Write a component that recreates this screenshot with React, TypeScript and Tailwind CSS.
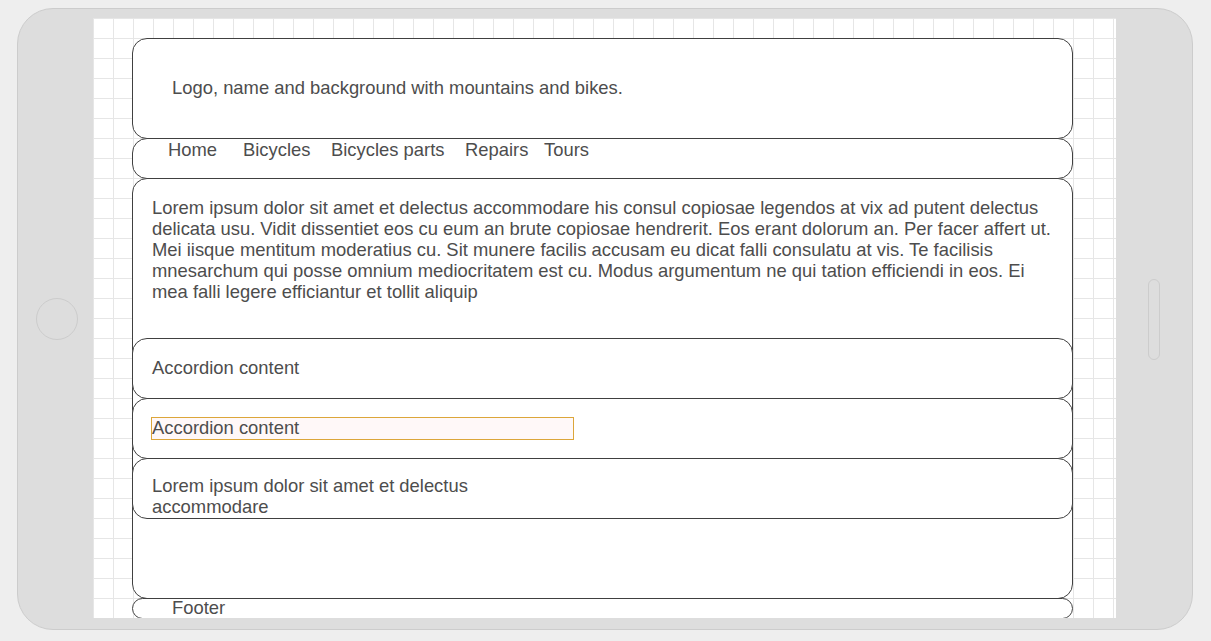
import React from "react";

const font = { fontFamily: '"Liberation Sans", Arial, sans-serif' };

export default function App() {
  return (
    <div
      className="w-[1211px] h-[641px] bg-[#eeeeee] pt-[8px] pl-[17px] overflow-hidden text-[#4d4d4d]"
      style={font}
    >
      <div className="w-[1176px] h-[622px] rounded-[36px] bg-[#dddddd] border border-[#cccccc] flex">
        {/* left bezel */}
        <div className="w-[75px] flex items-center justify-center pl-[2px]">
          <div className="w-[42px] h-[42px] rounded-full border border-[#cccccc]" />
        </div>

        {/* screen */}
        <div className="w-[1023px] h-[600px] mt-[9px] bg-white bg-[linear-gradient(to_right,#e6e6e6_1px,transparent_1px),linear-gradient(to_bottom,#e6e6e6_1px,transparent_1px)] [background-size:20px_20px] pl-[39px] pt-[20px] overflow-hidden">
          <div className="w-[941px] flex flex-col text-[18.4px] leading-[21px]">
            {/* header */}
            <div className="h-[101px] rounded-[15px] border border-[#404040] bg-white flex items-center pl-[39px] pb-[2px]">
              Logo, name and background with mountains and bikes.
            </div>

            {/* nav */}
            <div className="h-[41px] -mt-px rounded-[15px] border border-[#404040] bg-white flex items-start pl-[35px] leading-[21px]">
              <span className="w-[75px]">Home</span>
              <span className="w-[88px]">Bicycles</span>
              <span className="w-[134px]">Bicycles parts</span>
              <span className="w-[79px]">Repairs</span>
              <span>Tours</span>
            </div>

            {/* main */}
            <div className="h-[421px] -mt-px rounded-[15px] border border-[#404040] bg-white flex flex-col">
              <div className="h-[159px] pl-[19px] pt-[18px]">
                Lorem ipsum dolor sit amet et delectus accommodare his consul copiosae legendos at vix ad putent delectus
                <br />
                delicata usu. Vidit dissentiet eos cu eum an brute copiosae hendrerit. Eos erant dolorum an. Per facer affert ut.
                <br />
                Mei iisque mentitum moderatius cu. Sit munere facilis accusam eu dicat falli consulatu at vis. Te facilisis
                <br />
                mnesarchum qui posse omnium mediocritatem est cu. Modus argumentum ne qui tation efficiendi in eos. Ei
                <br />
                mea falli legere efficiantur et tollit aliquip
              </div>

              <div className="-mx-px h-[61px] rounded-[15px] border border-[#404040] bg-white flex items-center pl-[19px] pb-[2px]">
                Accordion content
              </div>

              <div className="-mx-px -mt-px h-[61px] rounded-[15px] border border-[#404040] bg-white flex items-center pl-[18px]">
                <div className="w-[423px] h-[23px] border border-[#dca63a] bg-[#fff8f8] leading-[20px]">
                  Accordion content
                </div>
              </div>

              <div className="-mx-px -mt-px h-[61px] rounded-[15px] border border-[#404040] bg-white pl-[19px] pt-[16px]">
                Lorem ipsum dolor sit amet et delectus
                <br />
                accommodare
              </div>
            </div>

            {/* footer */}
            <div className="h-[21px] -mt-px rounded-full border border-[#404040] bg-white pl-[39px] leading-[17px]">
              Footer
            </div>
          </div>
        </div>

        {/* right bezel */}
        <div className="flex-1 flex items-center justify-center">
          <div className="w-[12px] h-[81px] rounded-full border border-[#cccccc]" />
        </div>
      </div>
    </div>
  );
}
